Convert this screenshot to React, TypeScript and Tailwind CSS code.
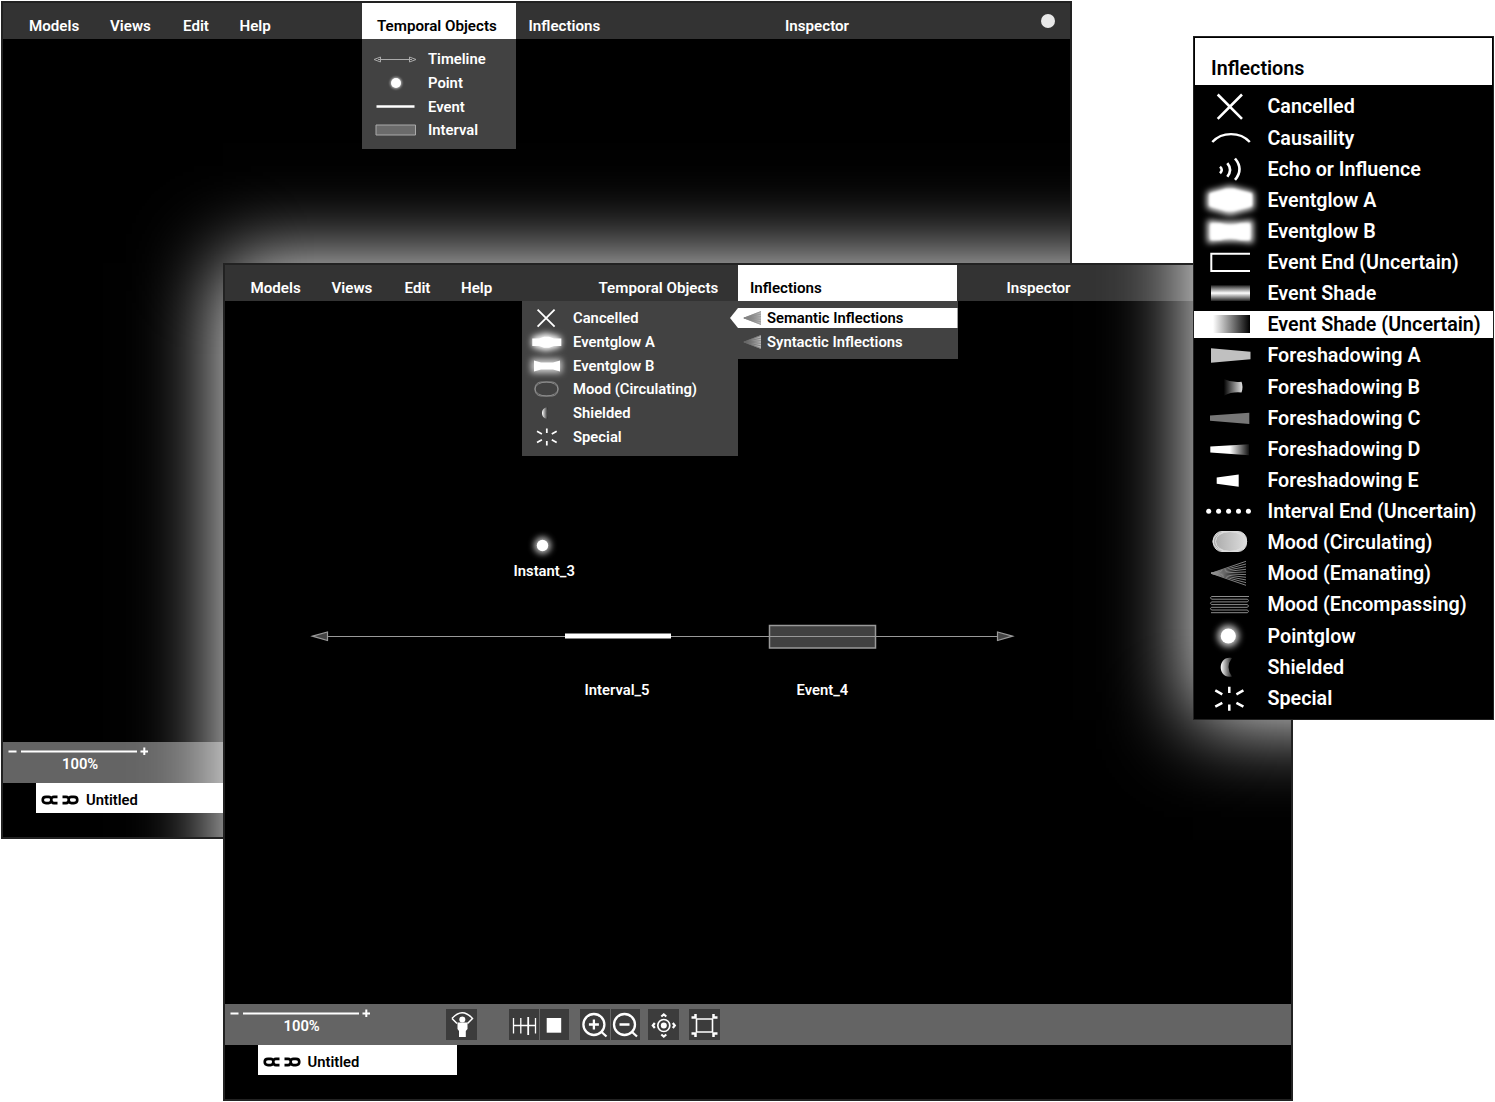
import React from 'react';

type Kids = { children?: React.ReactNode };

function Icon({ children, w = 52, h = 32, className = '', box = '0 0 52 32' }: Kids & { w?: number; h?: number; className?: string; box?: string }) {
  return (
    <svg width={w} height={h} viewBox={box} fill="none" className={`shrink-0 overflow-visible ${className}`}>
      {children}
    </svg>
  );
}

const cross = <path d="M13.7 4.5 38 28.8M38 4.5 13.7 28.8" stroke="#fff" strokeWidth="2.6" />;
const special = (
  <path
    d="M25.3 4.7v6.3M25.3 22.5v6.3M11.3 8.4l7 3.9M39.4 8.4l-7 3.9M11.3 24.7l7-3.9M39.4 24.7l-7-3.9"
    stroke="#fff"
    strokeWidth="2.5"
  />
);

const fan = (x0: number, y0: number, x1: number, top: number, bottom: number, n: number) =>
  Array.from({ length: n }, (_, i) => `M${x0} ${y0}L${x1} ${top + ((bottom - top) * i) / (n - 1)}`).join('');

function Defs() {
  return (
    <svg width="0" height="0" className="absolute">
      <defs>
        <filter id="soft" x="-60%" y="-100%" width="220%" height="300%">
          <feGaussianBlur stdDeviation="3" />
        </filter>
        <filter id="edge" x="-20%" y="-20%" width="140%" height="140%">
          <feGaussianBlur stdDeviation="0.8" />
        </filter>
        <linearGradient id="bar" x1="0" y1="0" x2="0" y2="1">
          <stop offset="0" stopColor="#222" />
          <stop offset="0.5" stopColor="#fff" />
          <stop offset="1" stopColor="#222" />
        </linearGradient>
        <linearGradient id="fadeDark">
          <stop offset="0" stopColor="#fff" />
          <stop offset="1" stopColor="#000" />
        </linearGradient>
        <linearGradient id="fadeLight">
          <stop offset="0" stopColor="#000" />
          <stop offset="1" stopColor="#e4e4e4" />
        </linearGradient>
        <linearGradient id="fadeTail">
          <stop offset="0.5" stopColor="#fff" />
          <stop offset="1" stopColor="#111" />
        </linearGradient>
        <linearGradient id="moon">
          <stop offset="0" stopColor="#fff" />
          <stop offset="1" stopColor="#222" />
        </linearGradient>
        <linearGradient id="mood">
          <stop offset="0" stopColor="#aaa" />
          <stop offset="1" stopColor="#ddd" />
        </linearGradient>
        <linearGradient id="wedge">
          <stop offset="0" stopColor="#666" />
          <stop offset="1" stopColor="#bbb" />
        </linearGradient>
      </defs>
    </svg>
  );
}

const panelRows: [string, React.ReactNode][] = [
  ['Cancelled', cross],
  ['Causaility', <path d="M8.3 20C18 9.500 36 9.500 45.8 20" stroke="#fff" strokeWidth="2.4" />],
  [
    'Echo or Influence',
    <path d="M16 13.800q3.500 3 0 6.400M23.300 10.200q5.500 6.600 0 13.500M31 5.500q9 10.700 0 21.400" stroke="#fff" strokeWidth="2.6" />,
  ],
  [
    'Eventglow A',
    <>
      <path d="M3 8 26 2 50 8V24.500L26 31 3 24.500Z" fill="#fff" filter="url(#soft)" />
      <path d="M5.500 9.500Q14 7.500 22 5H30Q39 7.500 48 9.500V22Q39 24 30 26.500H22Q14 24 5.500 22Z" fill="#fff" filter="url(#edge)" />
    </>,
  ],
  [
    'Eventglow B',
    <>
      <path d="M3.500 5Q26 9 49 5V28Q26 24 3.500 28Z" fill="#fff" filter="url(#soft)" />
      <path d="M6.500 8.500H16Q26 12 37 8.500H46V25H37Q26 21.500 16 25H6.500Z" fill="#fff" filter="url(#edge)" />
    </>,
  ],
  ['Event End (Uncertain)', <path d="M46 7.800H7.300V25H46" stroke="#fff" strokeWidth="2" />],
  ['Event Shade', <path d="M7 8.200H46V24H7Z" fill="url(#bar)" />],
  ['Event Shade (Uncertain)', <path d="M9 7H46V25H9Z" fill="url(#fadeDark)" />],
  ['Foreshadowing A', <path d="M7 9.300 46.500 12.700V20.300L7 23.700Z" fill="#c0c0c0" />],
  ['Foreshadowing B', <path d="M19.700 8.100Q28 12 37.500 10.800Q39.500 16 37.500 21.500Q28 20.500 19.700 24.800Z" fill="url(#fadeLight)" />],
  ['Foreshadowing C', <path d="M6 13.400 45.300 10.700V22L6 18.700Z" fill="#777" />],
  ['Foreshadowing D', <path d="M6.300 13.600 45 11.300V22.300L6.300 19.600Z" fill="url(#fadeTail)" />],
  ['Foreshadowing E', <path d="M12.700 13.400 34.700 10.400V22.700L12.700 19.700Z" fill="#fff" />],
  [
    'Interval End (Uncertain)',
    <g fill="#fff">
      {[4.7, 14.6, 24.600, 34.500, 44.400].map((x) => (
        <circle key={x} cx={x} cy="16.300" r="2.500" />
      ))}
    </g>,
  ],
  [
    'Mood (Circulating)',
    <g stroke="#ddd" strokeWidth="1">
      <rect x="9.500" y="5.500" width="33" height="20" rx="8.500" fill="url(#mood)" />
      <ellipse cx="25.700" cy="15.500" rx="17" ry="10" />
      <ellipse cx="26" cy="15.500" rx="14.500" ry="10" />
    </g>,
  ],
  ['Mood (Emanating)', <path d={fan(7, 16.3, 42, 4.3, 28.3, 10)} stroke="#909090" strokeWidth="0.900" />],
  [
    'Mood (Encompassing)',
    <path
      d="M45 8.500H7.500q-2 1.350 0 2.700H43.500q2 1.350 0 2.700H7.500q-2 1.350 0 2.700H43.500q2 1.350 0 2.700H7.500q-2 1.350 0 2.700H43.500q2 1.350 0 2.700H7"
      stroke="#8c8c8c"
      strokeWidth="1"
    />,
  ],
  [
    'Pointglow',
    <>
      <circle cx="24.300" cy="16" r="11" fill="#bbb" filter="url(#soft)" />
      <circle cx="24.300" cy="16" r="7.600" fill="#fff" />
    </>,
  ],
  ['Shielded', <path d="M28 7C13 4 13 28.500 28 25.500Q21 16 28 7Z" fill="url(#moon)" />],
  ['Special', special],
];

function InflectionsPanel() {
  return (
    <section className="absolute left-[1193px] top-[36px] flex h-[684px] w-[301px] flex-col border border-[#222] bg-black text-[19.700px] leading-[31.14px] font-semibold text-white">
      <h2 className="mx-px mt-px h-[47px] bg-white pl-4 pt-[14.500px] leading-[31px] text-black">Inflections</h2>
      <ul className="mt-[5.900px]">
        {panelRows.map(([name, art]) => (
          <li key={name} className="flex h-[31.140px] items-center">
            <div
              className={
                name === 'Event Shade (Uncertain)'
                  ? 'flex h-[27px] w-full items-center bg-white text-black'
                  : 'flex h-[27px] w-full items-center'
              }
            >
              <Icon className="ml-[10px]">{art}</Icon>
              <span className="ml-[11.500px] pt-px whitespace-nowrap">{name}</span>
            </div>
          </li>
        ))}
      </ul>
    </section>
  );
}

function MenuBar({ active }: { active: 'objects' | 'inflections' }) {
  const objects = active === 'objects';
  return (
    <nav className="flex h-[36px] w-full bg-[#333] text-[15.150px] leading-[47px] whitespace-nowrap">
      <span className="box-content w-[81px] shrink-0 pl-[26px]">Models</span>
      <span className="w-[73px] shrink-0">Views</span>
      <span className="w-[56.500px] shrink-0">Edit</span>
      <span className="w-[122.500px] shrink-0">Help</span>
      <span className={`w-[154px] shrink-0 pl-[15px] ${objects ? 'bg-white text-black' : ''}`}>Temporal Objects</span>
      <span className={`w-[219.500px] shrink-0 pl-[12.500px] ${objects ? '' : 'bg-white text-black'}`}>Inflections</span>
      <span className="pl-[49.500px]">Inspector</span>
    </nav>
  );
}

function LinkGlyph({ flip = false }: { flip?: boolean }) {
  return (
    <svg width="17" height="10" viewBox="0 0 17 10" fill="none" stroke="#000" strokeWidth="2.600" className={flip ? '-scale-x-100' : ''}>
      <path d="M10.300 5Q10.300 1.900 7.500 1.900H5Q1.700 1.900 1.700 5T5 8.100H7.500Q10.300 8.100 10.300 5Q10.300 1.900 13 1.900H16.500M10.300 5Q10.300 8.100 13 8.100H16.500" />
    </svg>
  );
}

function Tool({ children, wide = false }: Kids & { wide?: boolean }) {
  return (
    <div className={`h-[31px] bg-[#3c3c3c] ${wide ? 'w-[60px]' : 'w-[31px]'}`}>
      <svg width={wide ? 60 : 31} height="31" viewBox={wide ? '0 0 60 31' : '0 0 31 31'} fill="none" stroke="#fff">
        {children}
      </svg>
    </div>
  );
}

function Toolbar() {
  return (
    <div className="ml-[77px] flex pt-[5px]">
      <Tool>
        <path d="M6 9.500Q16 -2 26.500 9.500L21.500 14.500M6 9.500 11 14.500" strokeWidth="1.500" />
        <circle cx="16.300" cy="10.500" r="3" fill="#fff" stroke="none" />
        <path d="M11.500 13.500H21.500V20L19.800 22V28H13V22L11.500 20Z" fill="#fff" stroke="none" />
      </Tool>
      <div className="ml-[32px] mr-[11px]">
        <Tool wide>
          <path d="M30.500 0V31" stroke="#666" />
          <path d="M4.500 9V24.500M11.800 9V24.500M26.500 9V24.500M4 16.500H27" strokeWidth="1.300" />
          <path d="M19.200 8V26" strokeWidth="1.800" />
          <path d="M37.700 9H52.200V23.700H37.700Z" fill="#fff" stroke="none" />
        </Tool>
      </div>
      <Tool wide>
        <path d="M30.500 0V31" stroke="#666" />
        <g strokeWidth="2.300">
          <circle cx="13.900" cy="15.500" r="10.500" />
          <path d="M21 22.500 26.500 27.500M8.900 15.500H18.900M13.900 10.500V20.500" />
          <circle cx="44.500" cy="15.500" r="10.500" />
          <path d="M51.500 22.500 57 27.500M39.500 15.500H49.500" />
        </g>
      </Tool>
      <div className="ml-[8px] mr-[10px]">
        <Tool>
          <circle cx="15.800" cy="16.500" r="6" strokeWidth="1.700" />
          <circle cx="15.800" cy="16.500" r="3" fill="#fff" stroke="none" />
          <path
            d="M13.300 7.500 15.800 5.500 18.300 7.500M13.300 25.500 15.800 27.500 18.300 25.500M6.800 14 4.800 16.500 6.800 19M24.800 14 26.800 16.500 24.800 19"
            strokeWidth="2.200"
          />
        </Tool>
      </div>
      <Tool>
        <path d="M7.500 10H23.500V23H7.500Z" strokeWidth="1.600" />
        <path d="M2.500 8.500H6.500V5M28.500 8.500H24.500V5M2.500 24.500H6.500V28M28.500 24.500H24.500V28" strokeWidth="2.500" />
      </Tool>
    </div>
  );
}

function AppWindow({ active, children, menus, glow }: Kids & { active: 'objects' | 'inflections'; menus: React.ReactNode; glow: React.ReactNode }) {
  return (
    <div className="relative flex h-[838px] w-[1070.500px] flex-col overflow-hidden border-2 border-[#222] bg-black text-[14.800px] font-semibold text-white">
      <MenuBar active={active} />
      <main className="relative flex-1">
        {children}
        <div className="absolute left-0 top-0">{menus}</div>
      </main>
      <footer className="h-[95.500px]">
        <div className="flex h-[41px] w-full bg-[#646464]">
          <div className="w-[144px] shrink-0">
            <svg width="150" height="13" viewBox="0 0 150 13" stroke="#fff" strokeWidth="2" className="block">
              <path d="M5.500 9.500H13.500M18 9.500H134M137.500 9.500H145M141.300 5.500V13.500" />
            </svg>
            <div className="ml-[59px] leading-[18px]">100%</div>
          </div>
          {active === 'inflections' && <Toolbar />}
        </div>
        <div className="ml-[33px] flex h-[30px] w-[199px] items-center bg-white text-black">
          <div className="flex gap-[4px] pl-[5px] pt-[4px]">
            <LinkGlyph />
            <LinkGlyph flip />
          </div>
          <span className="pl-[7px] pt-[5px] whitespace-nowrap">Untitled</span>
        </div>
      </footer>
      {glow}
    </div>
  );
}

const objectRows: [string, React.ReactNode][] = [
  [
    'Timeline',
    <g stroke="#aaa">
      <path d="M6 12.500H40" />
      <path d="M2 12.500 8.500 10V15ZM44 12.500 37.500 10V15Z" />
    </g>,
  ],
  [
    'Point',
    <>
      <circle cx="24" cy="12" r="6" fill="#aaa" filter="url(#edge)" />
      <circle cx="24" cy="12" r="5" fill="#fff" />
    </>,
  ],
  ['Event', <path d="M4.500 11.500H42.500" stroke="#fff" strokeWidth="2.700" />],
  ['Interval', <path d="M4 7H43.500V17H4Z" fill="#6b6b6b" stroke="#aaa" />],
];

const semanticRows: [string, React.ReactNode][] = [
  ['Cancelled', <g transform="translate(0 0.500) scale(.7)">{cross}</g>],
  [
    'Eventglow A',
    <>
      <path d="M4 7 18 3 33 7V17L18 21 4 17Z" fill="#fff" filter="url(#soft)" />
      <path d="M4.300 8.500H11L16 6.800H21L26 8.500H33.300V16H26L21 17.700H16L11 16H4.300Z" fill="#fff" />
    </>,
  ],
  [
    'Eventglow B',
    <>
      <path d="M3 5H34V19H3Z" fill="#ccc" filter="url(#soft)" />
      <path d="M6 6.500 13 8.500H25L32 6.500V17.500L25 15.500H13L6 17.500Z" fill="#fff" />
    </>,
  ],
  [
    'Mood (Circulating)',
    <g stroke="#999" strokeWidth="0.800">
      <rect x="7" y="5" width="23" height="14" rx="6" />
      <ellipse cx="18.500" cy="12" rx="11.500" ry="7" />
    </g>,
  ],
  ['Shielded', <path d="M20 6.500C12 5.500 12 18.500 20 17.500Q17.500 12 20 6.500Z" fill="url(#moon)" />],
  ['Special', <g transform="translate(1.100 0.300) scale(.7)">{special}</g>],
];

function MenuList({ rows, iconWidth, gap }: { rows: [string, React.ReactNode][]; iconWidth: number; gap: number }) {
  return (
    <ul>
      {rows.map(([name, art]) => (
        <li key={name} className="flex h-[23.800px] items-center whitespace-nowrap" style={{ gap }}>
          <Icon w={iconWidth} h={24} box={`0 0 ${iconWidth} 24`}>{art}</Icon>
          <span className="pt-[0.400px]">{name}</span>
        </li>
      ))}
    </ul>
  );
}

function Wedge({ dark = false }: { dark?: boolean }) {
  return (
    <svg width="19" height="16" viewBox="0 0 19 16" className="shrink-0">
      <path d="M0 8 18 1V15Z" fill="url(#wedge)" />
      <path d={fan(1, 8, 18, 1.5, 14.5, 6)} stroke={dark ? '#666' : '#888'} strokeWidth="0.600" />
    </svg>
  );
}

function Diagram() {
  return (
    <>
      <svg width="710" height="130" viewBox="309 530 710 130" fill="none" className="absolute left-[84px] top-[229px]">
        <circle cx="542.500" cy="545.500" r="8.500" fill="#bbb" filter="url(#soft)" />
        <circle cx="542.500" cy="545.500" r="5.700" fill="#fff" />
        <path d="M769.500 625.500H875.500V648H769.500Z" fill="#414141" stroke="#999" strokeWidth="1.500" />
        <path d="M328 636.500H998" stroke="#999" strokeWidth="1.200" />
        <path d="M312.500 636.200 327.500 632V640.500ZM1012.500 636.200 997.500 632V640.500Z" fill="#444" stroke="#999" strokeWidth="1.200" />
        <path d="M565 636H671" stroke="#fff" strokeWidth="5" />
      </svg>
      <span className="absolute left-[289px] top-[259px]">Instant_3</span>
      <span className="absolute left-[360px] top-[378px]">Interval_5</span>
      <span className="absolute left-[572px] top-[378px]">Event_4</span>
    </>
  );
}

export default function App() {
  return (
    <div className="relative h-[1102px] w-[1495px] overflow-hidden bg-white font-['Roboto',sans-serif]">
      <Defs />
      <div className="absolute left-px top-px">
        <AppWindow
          active="objects"
          menus={
            <div className="absolute left-[359px] top-0 h-[110px] w-[154px] bg-[#424242] pl-[10px] pt-[8px]">
              <MenuList rows={objectRows} iconWidth={46} gap={10} />
            </div>
          }
          glow={
            <>
              <span className="absolute left-[1038px] top-[11px] h-[14px] w-[13.500px] rounded-full bg-[#e8e8e8]" />
              <div className="absolute left-[220px] top-[260px] h-[838px] w-[1070px] shadow-[0_0_80px_#fff]" />
            </>
          }
        />
      </div>
      <div className="absolute left-[222.500px] top-[263px]">
        <AppWindow
          active="inflections"
          menus={
            <>
              <div className="absolute left-[297px] top-0 h-[154.500px] w-[216.500px] bg-[#424242] pl-[6px] pt-[5px]">
                <MenuList rows={semanticRows} iconWidth={37} gap={8.500} />
              </div>
              <div className="absolute left-[513.500px] top-0 h-[57.500px] w-[219.500px] bg-[#424242] pt-[7px] whitespace-nowrap">
                <div className="-ml-[8px] flex h-[20px] items-center gap-[5px] bg-white pl-[13px] text-black [clip-path:polygon(0_50%,8px_0,100%_0,100%_100%,8px_100%)]">
                  <Wedge />
                  <span>Semantic Inflections</span>
                </div>
                <div className="mt-[4px] flex h-[20px] items-center gap-[5px] pl-[5px]">
                  <Wedge dark />
                  <span>Syntactic Inflections</span>
                </div>
              </div>
            </>
          }
          glow={<div className="absolute left-[968px] top-[-229px] h-[684px] w-[301px] shadow-[0_0_80px_#fff]" />}
        >
          <Diagram />
        </AppWindow>
      </div>
      <InflectionsPanel />
    </div>
  );
}
